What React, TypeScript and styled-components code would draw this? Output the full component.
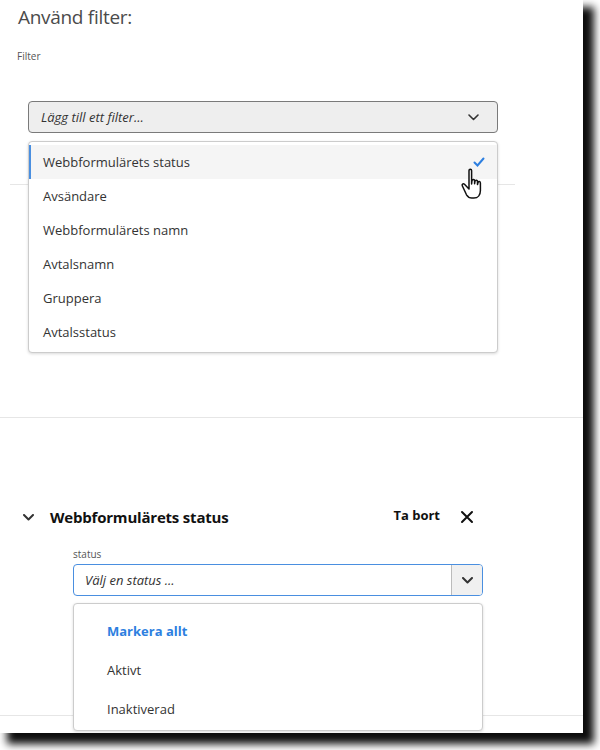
import styled, { createGlobalStyle } from "styled-components"

const Global = createGlobalStyle`
    body { margin: 0; background: #fff; font-family: "Open Sans", "Liberation Sans", sans-serif; color: #2c2c2c; }
    #root { height: 750px; }
`

const Panel = styled.div`
    position: relative;
    width: 583px;
    height: 733px;
    background: #fff;
    box-shadow: 9px 9px 8px 2px rgba(0, 0, 0, 0.95);
    overflow: hidden;
`
const Title = styled.h1`
    margin: 0;
    padding: 4px 0 0 18px;
    font-size: 19px;
    font-weight: 400;
    color: #4b4b4b;
    letter-spacing: -0.3px;
`
const Label = styled.div<{ $indent: number }>`
    font-size: 10px;
    color: #555;
    padding-left: ${p => p.$indent}px;
`
const SelectWrap = styled.div<{ $left: number; $width: number }>`
    position: relative;
    margin-left: ${p => p.$left}px;
    width: ${p => p.$width}px;
`
const Select = styled.div`
    height: 32px;
    box-sizing: border-box;
    border: 1px solid #7a7a7a;
    border-radius: 4px;
    background: #eeeeee;
    display: flex;
    align-items: center;
    justify-content: space-between;
    padding: 0 18px 0 12px;
    font-size: 13px;
    font-style: italic;
    color: #333;
`
const BlueSelect = styled.div`
    height: 32px;
    box-sizing: border-box;
    border: 1.5px solid #4a8fe0;
    border-radius: 4px;
    display: flex;
    align-items: center;
    font-size: 13px;
    font-style: italic;
    color: #333;
    overflow: hidden;
`
const BlueText = styled.div`
    flex: 1;
    padding-left: 11px;
`
const BlueButton = styled.div`
    width: 30px;
    height: 100%;
    border-left: 1px solid #bbb;
    background: #f0f0f0;
    display: flex;
    align-items: center;
    justify-content: center;
`
const Menu = styled.div<{ $top: number }>`
    position: absolute;
    left: 0;
    right: 0;
    top: ${p => p.$top}px;
    background: #fff;
    border: 1px solid #ccc;
    border-radius: 4px;
    box-shadow: 0 1px 3px rgba(0, 0, 0, 0.15);
    padding: 3px 0;
    z-index: 2;
`
const Item = styled.div<{ $active?: boolean }>`
    height: 34px;
    display: flex;
    align-items: center;
    justify-content: space-between;
    padding: 0 12px 0 12px;
    font-size: 13px;
    color: #333;
    background: ${p => (p.$active ? "#f5f5f5" : "transparent")};
    border-left: 2px solid ${p => (p.$active ? "#4a8fe0" : "transparent")};
`
const StatusItem = styled.div<{ $blue?: boolean }>`
    height: 39px;
    display: flex;
    align-items: center;
    padding-left: 33px;
    font-size: 13px;
    font-weight: ${p => (p.$blue ? 700 : 400)};
    color: ${p => (p.$blue ? "#2d7fe0" : "#333")};
`
const Divider = styled.div<{ $top: number; $left?: number; $right?: number }>`
    margin-top: ${p => p.$top}px;
    margin-left: ${p => p.$left ?? 0}px;
    margin-right: ${p => p.$right ?? 0}px;
    border-top: 1px solid #e6e6e6;
`
const FilterRow = styled.div`
    display: flex;
    align-items: center;
    margin-top: 87px;
    padding: 0 0 0 23px;
    height: 24px;
`
const FilterTitle = styled.div`
    flex: 1;
    margin-left: 16px;
    font-size: 15px;
    font-weight: 700;
    color: #111;
    letter-spacing: -0.2px;
`
const Remove = styled.div`
    font-size: 13px;
    font-weight: 700;
    color: #111;
    margin-right: 20px;
    margin-bottom: 4px;
`
const Cursor = styled.svg`
    position: absolute;
    left: 460px;
    top: 167px;
    z-index: 3;
`

const Chevron = ({ w = 2 }: { w?: number }) => (
    <svg width="11" height="7" viewBox="0 0 11 7">
        <path d="M1 1l4.5 4.5L10 1" fill="none" stroke="#333" strokeWidth={w} strokeLinecap="round" strokeLinejoin="round" />
    </svg>
)

export default function App() {
    const items = ["Webbformulärets status", "Avsändare", "Webbformulärets namn", "Avtalsnamn", "Gruppera", "Avtalsstatus"]
    return (
        <Panel>
            <Global />
            <Title>Använd filter:</Title>
            <Label $indent={17} style={{ marginTop: 19 }}>Filter</Label>
            <SelectWrap $left={28} $width={470} style={{ marginTop: 38 }}>
                <Select>
                    <span>Lägg till ett filter...</span>
                    <Chevron w={1.6} />
                </Select>
                <Menu $top={40}>
                    {items.map((t, i) => (
                        <Item key={t} $active={i === 0}>
                            <span>{t}</span>
                            {i === 0 && (
                                <svg width="12" height="10" viewBox="0 0 12 10">
                                    <path d="M1.5 5.5l3 3L10.5 1.5" fill="none" stroke="#2d7fe0" strokeWidth="2" strokeLinecap="round" />
                                </svg>
                            )}
                        </Item>
                    ))}
                </Menu>
            </SelectWrap>
            <Divider $top={51} $left={10} $right={68} />
            <Divider $top={232} />
            <FilterRow>
                <Chevron />
                <FilterTitle>Webbformulärets status</FilterTitle>
                <Remove>Ta bort</Remove>
                <svg width="14" height="14" viewBox="0 0 14 14" style={{ marginRight: 109 }}>
                    <path d="M2 2l10 10M12 2L2 12" stroke="#111" strokeWidth="2" strokeLinecap="round" />
                </svg>
            </FilterRow>
            <Label $indent={73} style={{ marginTop: 18 }}>status</Label>
            <SelectWrap $left={73} $width={410} style={{ marginTop: 3 }}>
                <BlueSelect>
                    <BlueText>Välj en status ...</BlueText>
                    <BlueButton><Chevron /></BlueButton>
                </BlueSelect>
                <Menu $top={39} style={{ padding: "7px 0 2px" }}>
                    <StatusItem $blue>Markera allt</StatusItem>
                    <StatusItem>Aktivt</StatusItem>
                    <StatusItem>Inaktiverad</StatusItem>
                </Menu>
            </SelectWrap>
            <Divider $top={119} />
            <Cursor width="32" height="40" viewBox="0 0 32 40">
                <path d="M9 3.5c0-1.6 2.6-1.6 2.6 0v13.5l.4-3.5c.3-1.6 2.6-1.4 2.6.2v3l.4-2.5c.3-1.5 2.5-1.3 2.5.3v3l.5-2c.4-1.4 2.4-1.1 2.4.4v7.5c0 4-2.200 7.6-6.6 7.6h-2c-2.5 0-4-1.2-5.3-3.2L2.4 19c-.9-1.4.8-2.9 2.1-1.700L9 22z" fill="#fff" stroke="#111" strokeWidth="1.5" strokeLinejoin="round" />
            </Cursor>
        </Panel>
    )
}
